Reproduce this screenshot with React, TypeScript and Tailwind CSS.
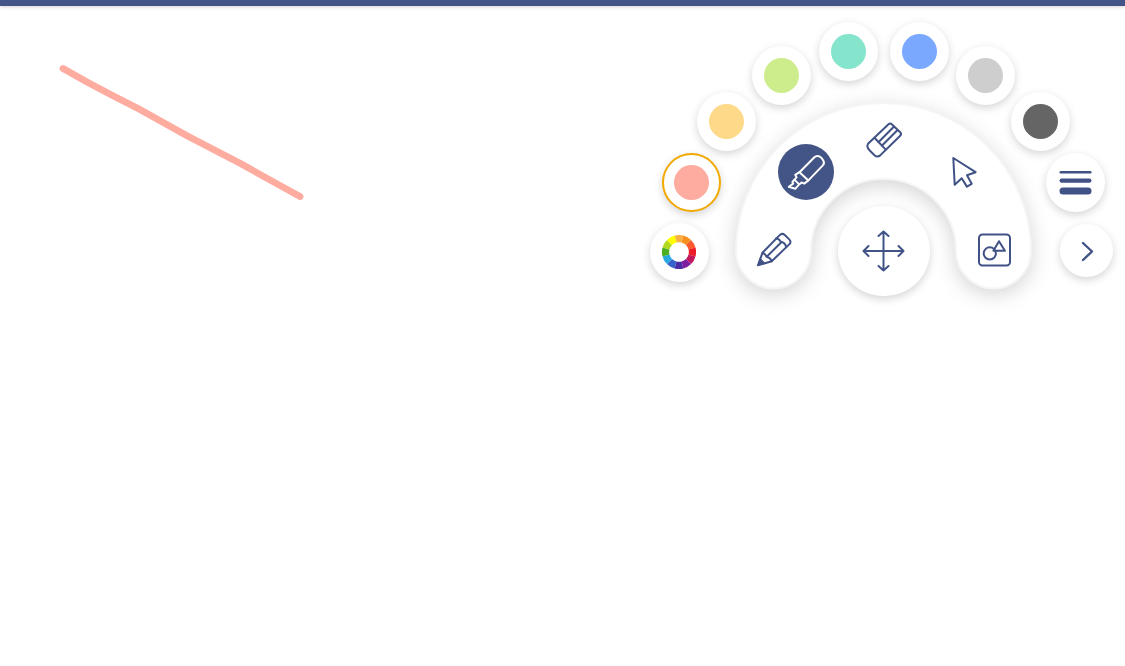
import { useState } from "react";
import type { ReactNode } from "react";

const swatches = [
  { name: "Coral", place: "left-[22px] top-[147px]", fill: "bg-[#ffaca0]" },
  { name: "Apricot", place: "left-[57px] top-[86px]", fill: "bg-[#ffd98a]" },
  { name: "Lime", place: "left-[112px] top-[40px]", fill: "bg-[#cdec8c]" },
  { name: "Mint", place: "left-[179px] top-[16px]", fill: "bg-[#84e4cc]" },
  { name: "Blue", place: "left-[250px] top-[16px]", fill: "bg-[#7ba8ff]" },
  { name: "Silver", place: "left-[316px] top-[40px]", fill: "bg-[#cecece]" },
  { name: "Charcoal", place: "left-[371px] top-[86px]", fill: "bg-[#656565]" },
];

const wheel = [
  "#fbb040", "#f7901e", "#fb5a2c", "#ee1c25", "#c4175c", "#7f1f9f",
  "#4a2ca3", "#3563c9", "#29a9e0", "#4caf22", "#b2d820", "#ffff00",
];

const bubble =
  "absolute flex items-center justify-center rounded-full bg-white shadow-[0_3px_9px_rgba(0,0,0,0.17)]";

function Icon({ children }: { children: ReactNode }) {
  return (
    <svg
      viewBox="-22 -22 44 44"
      className="size-11"
      fill="none"
      stroke="currentColor"
      strokeWidth="2"
      strokeLinecap="round"
      strokeLinejoin="round"
      aria-hidden="true"
    >
      {children}
    </svg>
  );
}

const tools = [
  {
    name: "Pencil",
    place: "left-[106px] top-[216px]",
    icon: (
      <>
        <path d="M-11.5 2.7L5.4 -14.6Q8 -17.4 10.8 -15L15.2 -10.6Q17.8 -8 15.2 -5.6L-2.3 11.3L-16 15.3Z" />
        <path d="M2 -11.4Q5 -11.3 6.5 -8.6Q11.5 -7.5 12.2 -2.8M-11.5 2.7Q-8.8 3.6 -7.4 6.8Q-3.6 7.6 -2.3 11.3M-7.4 6.8L7.6 -8" />
        <path d="M-14 8.5L-16.2 15.3L-9.5 13.2Z" fill="currentColor" strokeWidth="1" />
      </>
    ),
  },
  {
    name: "Highlighter",
    place: "left-[138px] top-[138px]",
    icon: (
      <>
        <path d="M-6.5 .2L8.4 -14.8Q10.6 -16.8 13.4 -15.6Q16 -14.2 17.4 -11.4Q18.8 -8.6 16.6 -6.4L2.4 8.4" />
        <path d="M-6.5 .2L2.4 8.4M-6.5 .2L-10.8 2.8L-9.4 5.4L-11.6 7.6L-6.8 12.4L-4.4 10.4L-1.8 11.6L2.4 8.4M-11.6 7.6L-13.6 9.8L-12.8 11.6L-17.2 14.8L-10.8 16.8L-6.8 12.4" />
      </>
    ),
  },
  {
    name: "Eraser",
    place: "left-[216px] top-[106px]",
    icon: (
      <>
        <path d="M-16 3.8L4.5 -15.8Q6.2 -17.3 8 -15.6L16.2 -7.8Q17.8 -6 16.2 -4.2L-3.8 15.4Q-6.5 17.6 -9.5 15.2L-14.5 10.2Q-17.8 7 -16 3.8Z" />
        <path d="M-9.3 -2L1.5 9.4M-5.6 2.2L9.8 -13.3M-2.2 5.8L13.3 -9.8" />
      </>
    ),
  },
  {
    name: "Select",
    place: "left-[295px] top-[138px]",
    icon: <path d="M-9.7 -14L12.6 .2L4 3.3L8.7 11.8L3.9 14.6L-1.3 6.2L-8.3 12.7Z" />,
  },
  {
    name: "Shapes",
    place: "left-[326px] top-[216px]",
    icon: (
      <>
        <rect x="-15" y="-15.5" width="31" height="31" rx="3.5" />
        <circle cx="-4.2" cy="3.4" r="6.1" />
        <path d="M5 -8.8L10.9 .8H-.6Z" />
      </>
    ),
  },
];

function ColorWheel() {
  return (
    <svg viewBox="-17 -17 35 35" className="size-[35px] overflow-visible" fill="none" strokeWidth="7.2" aria-hidden="true">
      {wheel.map((color, i) => (
        <path key={color} d="M-3.5 -13A13.5 13.5 0 0 1 3.5 -13" stroke={color} transform={`rotate(${i * 30})`} />
      ))}
    </svg>
  );
}

export default function App() {
  const [tool, setTool] = useState("Highlighter");
  const [color, setColor] = useState("Coral");

  return (
    <div className="flex min-h-screen flex-col bg-white font-['Open_Sans',sans-serif] text-[#405286]">
      <header className="h-1.5 bg-[#435486] shadow-[0_0_4px_rgba(60,20,60,0.3)]" />
      <main className="relative grow">
        <svg className="block h-56 w-80" viewBox="0 6 320 224" role="img" aria-label="Highlighter stroke">
          <path
            d="M63 68.5L87 82L112 95.2L139 109L187 135.7L240 163.3L287 189.4L300 196.5"
            fill="none"
            stroke="#ffaca0"
            strokeWidth="6.8"
            strokeLinecap="round"
            strokeLinejoin="round"
          />
        </svg>

        <nav aria-label="Drawing tools" className="absolute top-0 right-0 h-80 w-[485px]">
          <svg
            className="absolute inset-0 h-full w-full overflow-visible drop-shadow-[0_5px_10px_rgba(0,0,0,0.17)]"
            viewBox="0 0 485 320"
            aria-hidden="true"
          >
            <path
              d="M96 245A147.5 148 0 0 1 391 245A37.5 37.5 0 0 1 316 245A72.5 72 0 0 0 171 245A37.5 37.5 0 0 1 96 245Z"
              fill="white"
              stroke="#f5f5f5"
              strokeWidth="2"
            />
          </svg>

          {tools.map(({ name, place, icon }) => (
            <button
              key={name}
              type="button"
              aria-label={name}
              aria-pressed={tool === name}
              onClick={() => setTool(name)}
              className={`absolute ${place} flex size-14 items-center justify-center rounded-full ${
                tool === name ? "bg-[#435486] text-white" : ""
              }`}
            >
              <Icon>{icon}</Icon>
            </button>
          ))}

          <button type="button" aria-label="Move menu" className={`${bubble} top-[200px] left-[198px] h-[90px] w-[92px]`}>
            <Icon>
              <path d="M-20.5 0H19.5M-.5 -19.5V19.5M-15.5 -5L-20.5 0L-15.5 5M14.5 -5L19.5 0L14.5 5M-5.5 -15L-.5 -19.5L4.5 -15M-5.5 15L-.5 19.5L4.5 15" />
            </Icon>
          </button>

          <button type="button" aria-label="Custom color" className={`${bubble} top-[217px] left-[10px] size-[59px]`}>
            <ColorWheel />
          </button>

          {swatches.map(({ name, place, fill }) => (
            <button
              key={name}
              type="button"
              aria-label={name}
              aria-pressed={color === name}
              onClick={() => setColor(name)}
              className={`${bubble} ${place} size-[59px] ${color === name ? "border-2 border-[#f2a900]" : ""}`}
            >
              <span className={`size-[35px] rounded-full ${fill}`} />
            </button>
          ))}

          <button type="button" aria-label="Line thickness" className={`${bubble} top-[147px] left-[406px] size-[59px]`}>
            <svg viewBox="-0.5 0 33 25" className="h-[25px] w-[33px]" fill="currentColor" aria-hidden="true">
              <rect x="0" y="1" width="32" height="2.6" rx="1.3" />
              <rect x="0" y="8.4" width="32" height="4.4" rx="2.2" />
              <rect x="0" y="17.6" width="32" height="7" rx="3.5" />
            </svg>
          </button>

          <button type="button" aria-label="Next" className={`${bubble} top-[218px] left-[420px] size-[53px]`}>
            <Icon>
              <path d="M-4 -8L5 .5L-4 9" strokeWidth="2.4" />
            </Icon>
          </button>
        </nav>
      </main>
    </div>
  );
}
